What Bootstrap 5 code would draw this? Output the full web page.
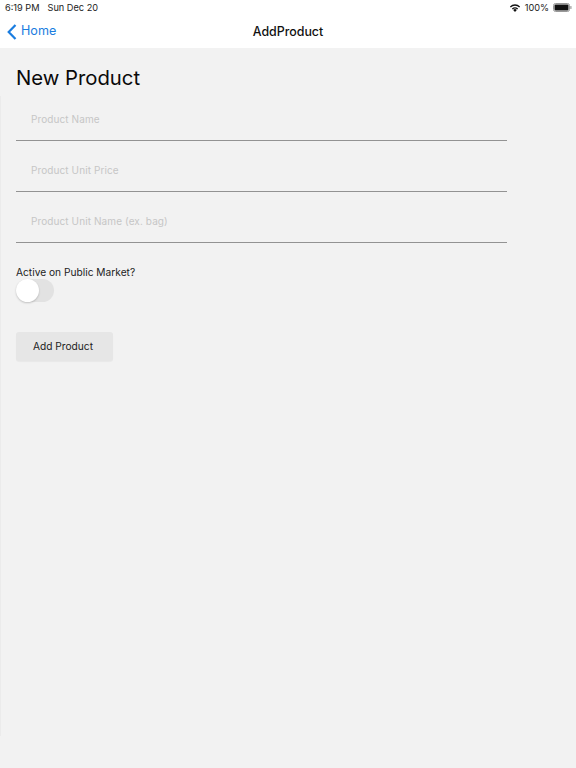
<!DOCTYPE html>
<html lang="en">
<head>
<meta charset="utf-8">
<title>AddProduct</title>
<link href="https://cdn.jsdelivr.net/npm/bootstrap@5.3.0/dist/css/bootstrap.min.css" rel="stylesheet">
<style>
html,body{height:100%}
body{background:#f2f2f2;font-family:Inter,"Liberation Sans",Arial,sans-serif;color:#111}
.app-shell{height:768px;overflow:hidden;position:relative}
.edge-line{position:absolute;left:0;top:96px;height:640px;width:1px;background:#ebebeb}
.top-area{background:#fff;height:48px;flex:none}
.status-row{height:15px;padding-top:1px;font-size:9.2px;padding-left:5px;padding-right:4px;color:#222}
.status-left{gap:8px}
.nav-row{height:33px;position:relative}
.back-link{color:#1a7de0;text-decoration:none;font-size:12.6px;gap:4px;padding-left:7px}
.nav-title{position:absolute;left:0;right:0;top:0;line-height:33px;text-align:center;font-size:12.4px;font-weight:500;color:#111}
.form-area{padding:16px 0 0 16px;width:507px}
.page-head{font-size:20.3px;line-height:27px;margin:0;font-weight:400;color:#0a0a0a}
.line-field{display:block;width:100%;height:51px;border:0;border-bottom:1px solid #939393;border-radius:0;background:transparent;padding:7px 15px 0;font-size:10px;letter-spacing:.1px;color:#222;box-shadow:none;outline:0}
.line-field::placeholder{color:#c6c6c6;opacity:1}
.first-field{height:50px;padding-top:6px}
.toggle-label{font-size:10.2px;line-height:13px;margin:23px 0 0;display:block;color:#222}
.toggle-track{width:38px;height:23px;background:#e2e2e2;border-radius:12px;position:relative}
.toggle-knob{position:absolute;left:0;top:0;width:23px;height:23px;border-radius:50%;background:#fff;box-shadow:0 1px 2px rgba(0,0,0,.2)}
.add-btn{width:97px;height:29px;margin-top:30px;background:#e6e6e6;border:0;border-radius:3px;font-size:10.2px;color:#222;padding:1px 3px 0 0;box-shadow:0 1px 1px rgba(0,0,0,.04)}
.add-btn:hover{background:#e6e6e6;color:#222}
</style>
</head>
<body>
<div class="app-shell d-flex flex-column">
  <div class="edge-line"></div>
  <div class="top-area">
    <div class="status-row d-flex justify-content-between align-items-center">
      <div class="status-left d-flex"><span>6:19 PM</span><span>Sun Dec 20</span></div>
      <div class="d-flex align-items-center gap-1">
        <svg width="12" height="9" viewBox="0 0 12 9" aria-hidden="true"><path d="M6 9 4.2 6.9a2.6 2.6 0 0 1 3.6 0z" fill="#111"/><path d="M2.9 5.6a4.5 4.5 0 0 1 6.2 0l-.8.9a3.3 3.3 0 0 0-4.6 0z" fill="#111"/><path d="M.9 3.4a7.4 7.4 0 0 1 10.2 0l-.9 1a6 6 0 0 0-8.4 0z" fill="#111"/></svg>
        <span>100%</span>
        <svg width="19" height="9" viewBox="0 0 19 9" aria-hidden="true"><rect x=".5" y=".5" width="16" height="8" rx="2" fill="none" stroke="#999"/><rect x="1.5" y="1.5" width="14" height="6" rx="1" fill="#111"/><rect x="17.3" y="3" width="1.2" height="3" rx=".6" fill="#999"/></svg>
      </div>
    </div>
    <div class="nav-row">
      <div class="nav-title">AddProduct</div>
      <a href="#" class="back-link d-inline-flex align-items-center h-100 position-relative">
        <svg width="10" height="16" viewBox="0 0 10 16" aria-hidden="true"><path d="M8.5 1 1.7 8l6.8 7" fill="none" stroke="#1a7de0" stroke-width="2.2"/></svg>
        <span>Home</span>
      </a>
    </div>
  </div>
  <main class="form-area">
    <h1 class="page-head">New Product</h1>
    <input class="line-field first-field" placeholder="Product Name" aria-label="Product Name">
    <input class="line-field" placeholder="Product Unit Price" aria-label="Product Unit Price">
    <input class="line-field" placeholder="Product Unit Name (ex. bag)" aria-label="Product Unit Name">
    <label class="toggle-label">Active on Public Market?</label>
    <div class="toggle-track"><div class="toggle-knob"></div></div>
    <button class="btn add-btn" type="button">Add Product</button>
  </main>
</div>
<script src="https://cdn.jsdelivr.net/npm/bootstrap@5.3.0/dist/js/bootstrap.bundle.min.js"></script>
</body>
</html>
